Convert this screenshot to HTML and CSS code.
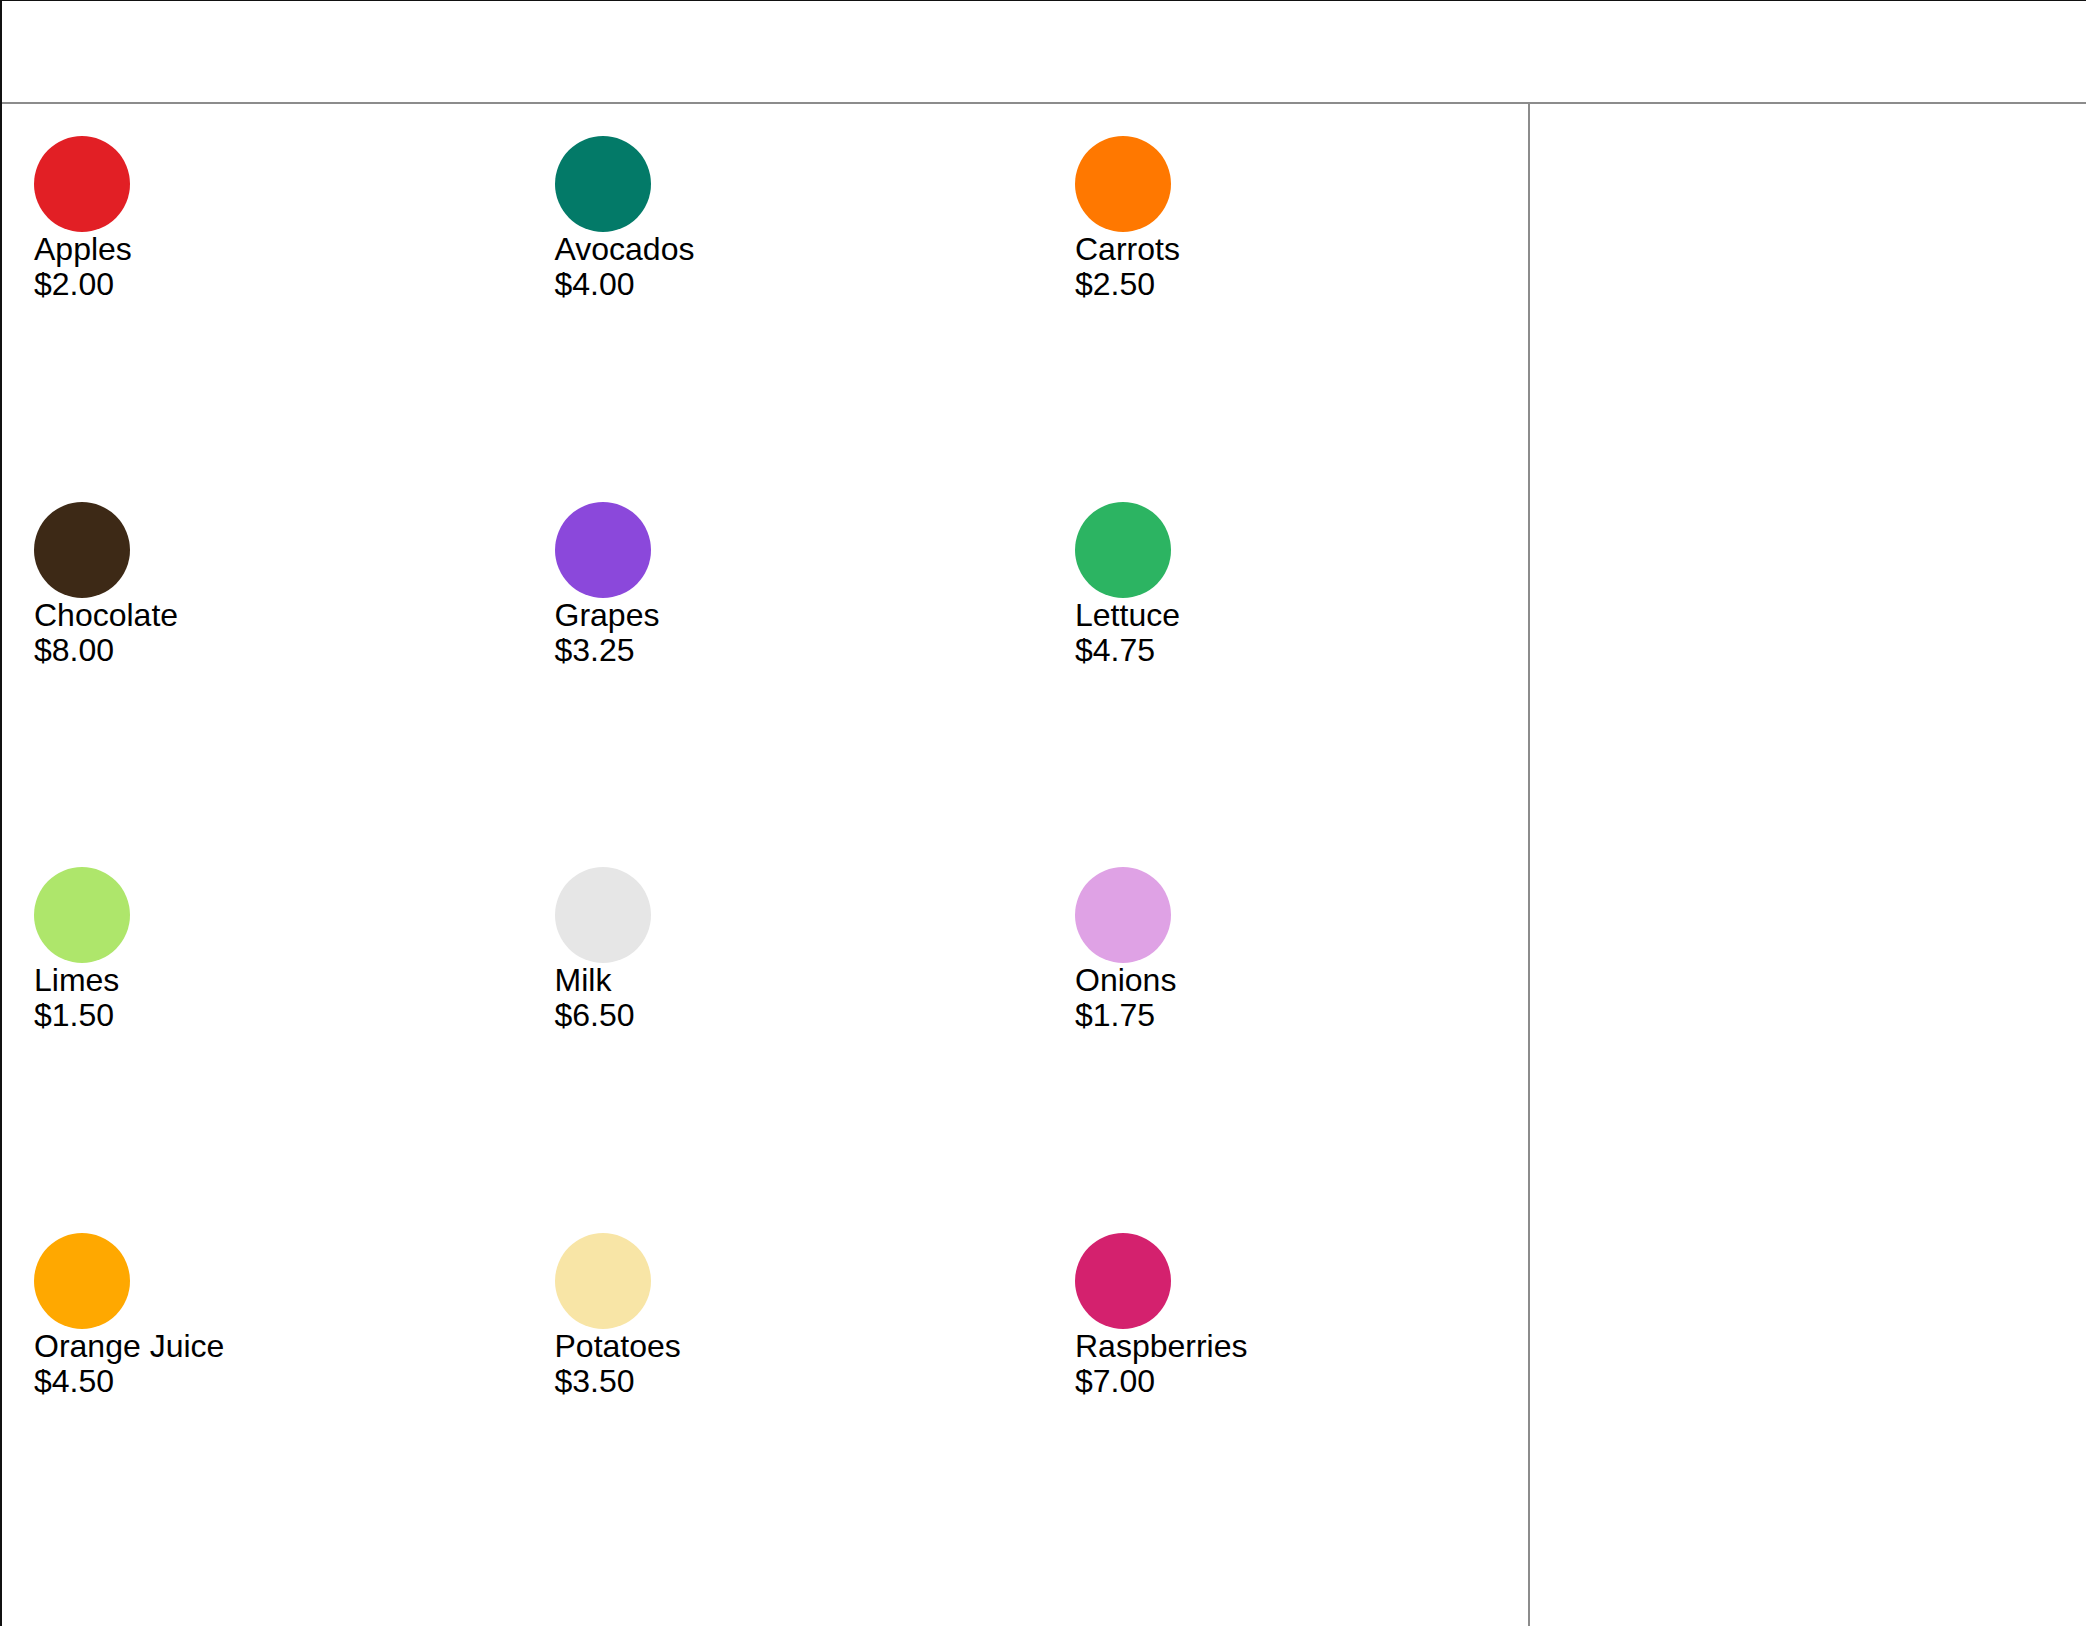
FILE: index.html
```html
<!DOCTYPE html>
<html lang="en">
<head>
<meta charset="utf-8">
<title>Grocery</title>
<link rel="stylesheet" href="styles.css">
</head>
<body>
<div class="frame">
  <header class="topbar"></header>
  <div class="main">
    <section class="catalog">
      <div class="item"><span class="swatch apples"></span><div class="name">Apples</div><div class="price">$2.00</div></div>
      <div class="item"><span class="swatch avocados"></span><div class="name">Avocados</div><div class="price">$4.00</div></div>
      <div class="item"><span class="swatch carrots"></span><div class="name">Carrots</div><div class="price">$2.50</div></div>
      <div class="item"><span class="swatch chocolate"></span><div class="name">Chocolate</div><div class="price">$8.00</div></div>
      <div class="item"><span class="swatch grapes"></span><div class="name">Grapes</div><div class="price">$3.25</div></div>
      <div class="item"><span class="swatch lettuce"></span><div class="name">Lettuce</div><div class="price">$4.75</div></div>
      <div class="item"><span class="swatch limes"></span><div class="name">Limes</div><div class="price">$1.50</div></div>
      <div class="item"><span class="swatch milk"></span><div class="name">Milk</div><div class="price">$6.50</div></div>
      <div class="item"><span class="swatch onions"></span><div class="name">Onions</div><div class="price">$1.75</div></div>
      <div class="item"><span class="swatch orange-juice"></span><div class="name">Orange Juice</div><div class="price">$4.50</div></div>
      <div class="item"><span class="swatch potatoes"></span><div class="name">Potatoes</div><div class="price">$3.50</div></div>
      <div class="item"><span class="swatch raspberries"></span><div class="name">Raspberries</div><div class="price">$7.00</div></div>
    </section>
    <aside class="sidebar"></aside>
  </div>
</div>
</body>
</html>
```
FILE: styles.css
```css
html, body {
  margin: 0;
  padding: 0;
  background: #ffffff;
}
body {
  font-family: "Liberation Sans", Arial, Helvetica, sans-serif;
  color: #000;
}
.frame {
  height: 1626px;
  box-sizing: border-box;
  border-top: 1px solid #111;
  border-left: 2px solid #111;
  display: flex;
  flex-direction: column;
  overflow: hidden;
}
.topbar {
  height: 101px;
  flex: none;
  border-bottom: 2px solid #8c8c8c;
}
.main {
  flex: 1;
  display: flex;
  min-height: 0;
}
.catalog {
  width: 1528px;
  flex: none;
  box-sizing: border-box;
  border-right: 2px solid #8c8c8c;
  padding: 32px 0 0 32px;
  display: grid;
  grid-template-columns: repeat(3, 520.5px);
  grid-auto-rows: 365.7px;
  align-content: start;
}
.sidebar {
  flex: 1;
}
.item {
  display: flex;
  flex-direction: column;
  align-items: flex-start;
  font-size: 32px;
  line-height: 35px;
}
.swatch {
  display: block;
  width: 96px;
  height: 96px;
  border-radius: 50%;
}
.apples { background: #e21f25; }
.avocados { background: #037a68; }
.carrots { background: #ff7800; }
.chocolate { background: #3d2916; }
.grapes { background: #8b48db; }
.lettuce { background: #2cb462; }
.limes { background: #aee66b; }
.milk { background: #e6e6e6; }
.onions { background: #dfa2e5; }
.orange-juice { background: #ffa800; }
.potatoes { background: #f8e5a6; }
.raspberries { background: #d4216e; }
```
